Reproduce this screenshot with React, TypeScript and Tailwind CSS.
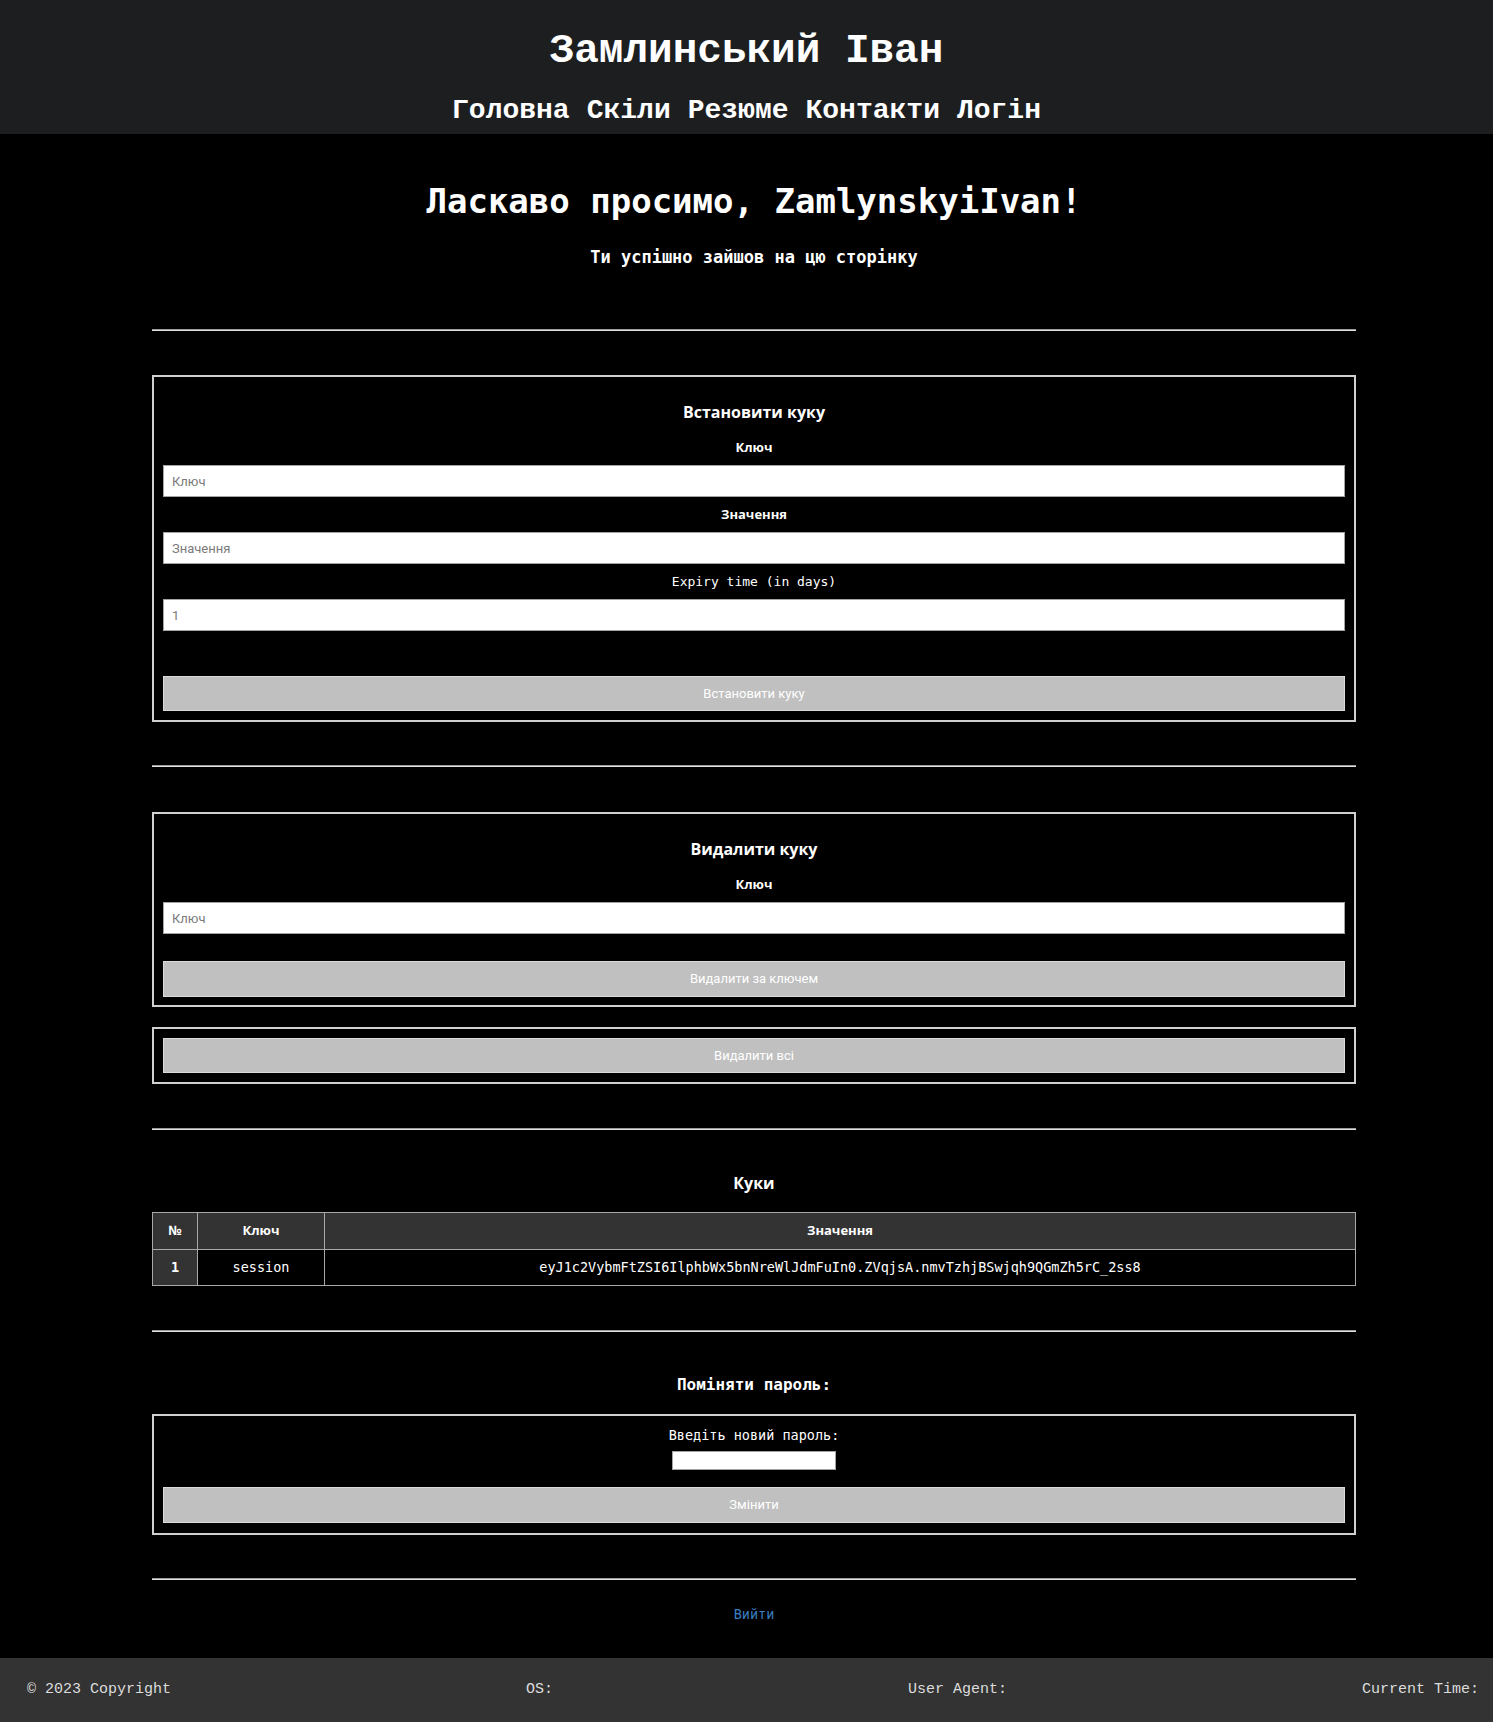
const mono = "font-['DejaVu_Sans_Mono',monospace]";
const sans = "font-['Open_Sans','Noto_Sans',sans-serif]";
const ui = "font-['Roboto','Liberation_Sans',sans-serif]";

const navLinks = ["Головна", "Скіли", "Резюме", "Контакти", "Логін"];

function Rule({ className = "" }: { className?: string }) {
  return (
    <div
      className={`h-0 border-y border-t-[#9c9c9c] border-b-[#e2e2e2] ${className}`}
    />
  );
}

function Field({
  label,
  placeholder,
  labelFont,
  first,
}: {
  label: string;
  placeholder: string;
  labelFont: string;
  first?: boolean;
}) {
  return (
    <>
      <label
        className={`block text-center text-[13px] leading-[17px] text-white ${labelFont} ${
          first ? "mt-[17px]" : "mt-[9px]"
        } mb-[9px]`}
      >
        {label}
      </label>
      <input
        placeholder={placeholder}
        className={`block h-[32px] w-full border border-[#a3a3a3] bg-white px-[8px] text-[13px] text-[#333] placeholder:text-[#7a7a7a] ${ui}`}
      />
    </>
  );
}

function GrayButton({ children, className = "" }: { children: string; className?: string }) {
  return (
    <button
      className={`block h-[35px] w-full border border-[#dadada] bg-[#c0c0c0] text-[13px] text-white ${ui} ${className}`}
    >
      {children}
    </button>
  );
}

export default function App() {
  return (
    <div className="min-h-[1722px] bg-black text-white">
      <header className="flex h-[134px] flex-col items-center bg-[#1d1e20] font-['Liberation_Mono','Courier_New',monospace] font-bold">
        <h1 className="mt-[28px] text-[41px] leading-[46px]">Замлинський Іван</h1>
        <nav className="mt-[21px] flex gap-[17px] text-[28px] leading-[32px]">
          {navLinks.map((l) => (
            <a key={l} href="#">
              {l}
            </a>
          ))}
        </nav>
      </header>

      <main className="pl-[152px] pr-[137px]">
        <h2 className={`mt-[47px] text-center text-[34px] font-bold leading-[40px] ${mono}`}>
          Ласкаво просимо, ZamlynskyiIvan!
        </h2>
        <p className={`mt-[26px] text-center text-[17px] font-bold leading-[20px] ${mono}`}>
          Ти успішно зайшов на цю сторінку
        </p>

        <Rule className="mt-[62px]" />

        <form className="mt-[44px] border-2 border-[#d0d0d0] px-[9px] pt-[25px] pb-[9px]">
          <h3 className={`text-center text-[16px] font-bold leading-[20px] ${sans}`}>
            Встановити куку
          </h3>
          <Field label="Ключ" placeholder="Ключ" labelFont={`${sans} font-bold`} first />
          <Field label="Значення" placeholder="Значення" labelFont={`${sans} font-bold`} />
          <Field label="Expiry time (in days)" placeholder="1" labelFont={mono} />
          <GrayButton className="mt-[45px]">Встановити куку</GrayButton>
        </form>

        <Rule className="mt-[43px]" />

        <form className="mt-[45px] border-2 border-[#d0d0d0] px-[9px] pt-[25px] pb-[8px]">
          <h3 className={`text-center text-[16px] font-bold leading-[20px] ${sans}`}>
            Видалити куку
          </h3>
          <Field label="Ключ" placeholder="Ключ" labelFont={`${sans} font-bold`} first />
          <GrayButton className="mt-[27px] h-[36px]">Видалити за ключем</GrayButton>
        </form>

        <form className="mt-[20px] border-2 border-[#d0d0d0] px-[9px] py-[9px]">
          <GrayButton>Видалити всі</GrayButton>
        </form>

        <Rule className="mt-[44px]" />

        <h3 className={`mt-[43px] text-center text-[16px] font-bold leading-[20px] ${sans}`}>
          Куки
        </h3>
        <table className="mt-[19px] w-full border-collapse border border-[#a8a8a8] text-center">
          <thead>
            <tr className={`h-[37px] bg-[#333] text-[13px] font-bold ${sans}`}>
              <th className="w-[45px] border border-[#a8a8a8]">№</th>
              <th className="w-[127px] border border-[#a8a8a8]">Ключ</th>
              <th className="border border-[#a8a8a8]">Значення</th>
            </tr>
          </thead>
          <tbody>
            <tr className={`h-[36px] text-[13.5px] ${mono}`}>
              <td className="border border-[#a8a8a8] bg-[#333] font-bold">1</td>
              <td className="border border-[#a8a8a8]">session</td>
              <td className="border border-[#a8a8a8]">
                eyJ1c2VybmFtZSI6IlphbWx5bnNreWlJdmFuIn0.ZVqjsA.nmvTzhjBSwjqh9QGmZh5rC_2ss8
              </td>
            </tr>
          </tbody>
        </table>

        <Rule className="mt-[44px]" />

        <h3 className={`mt-[43px] text-center text-[16px] font-bold leading-[20px] ${mono}`}>
          Поміняти пароль:
        </h3>
        <form className="mt-[19px] flex flex-col items-center border-2 border-[#d0d0d0] px-[9px] pt-[11px] pb-[10px]">
          <label className={`text-[13.5px] leading-[17px] ${mono}`}>Введіть новий пароль:</label>
          <input
            type="password"
            className="mt-[7px] h-[19px] w-[164px] border border-[#a3a3a3] bg-white"
          />
          <GrayButton className="mt-[17px] h-[36px]">Змінити</GrayButton>
        </form>

        <Rule className="mt-[43px]" />

        <div className="mt-[21px] mb-[33px] text-center">
          <a href="#" className={`text-[13.5px] leading-[18px] text-[#3a7ec0] ${mono}`}>
            Вийти
          </a>
        </div>
      </main>

      <footer className="flex h-[64px] items-center justify-between bg-[#333] pl-[27px] pr-[14px] font-['Liberation_Mono','Courier_New',monospace] text-[15px] text-[#dcdcdc]">
        <span>© 2023 Copyright</span>
        <span>OS:</span>
        <span>User Agent:</span>
        <span>Current Time:</span>
      </footer>
    </div>
  );
}
